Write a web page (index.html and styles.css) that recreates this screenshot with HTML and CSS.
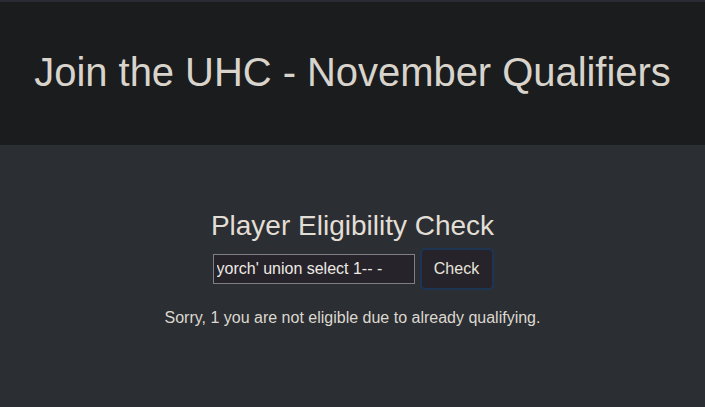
FILE: index.html
```html
<!DOCTYPE html>
<html>
<head>
<meta charset="utf-8">
<link rel="stylesheet" href="styles.css">
</head>
<body>
<header class="hero">
  <h1 class="hero-title">Join the UHC - November Qualifiers</h1>
</header>
<main class="content">
  <h2 class="check-title">Player Eligibility Check</h2>
  <form class="check-form">
    <input class="check-input" type="text" value="yorch' union select 1-- -">
    <button class="check-btn" type="button">Check</button>
  </form>
  <p class="check-result">Sorry, 1 you are not eligible due to already qualifying.</p>
</main>
</body>
</html>
```
FILE: styles.css
```css
html, body {
  margin: 0;
  padding: 0;
  height: 100%;
}
body {
  background: #2b2e32;
  color: #dcd8d0;
  font-family: "Liberation Sans", Arial, sans-serif;
}
.hero {
  background: #1b1c1e;
  border-top: 2px solid #2a2b33;
  height: 143px;
  display: flex;
  align-items: center;
  justify-content: center;
}
.hero-title {
  margin: 0;
  font-size: 40px;
  font-weight: 300;
  color: #d8d4cc;
  letter-spacing: -0.05px;
  padding-bottom: 2px;
}
.content {
  display: flex;
  flex-direction: column;
  align-items: center;
  padding-top: 64px;
}
.check-title {
  margin: 0;
  font-size: 28px;
  font-weight: 400;
  color: #e2ded6;
  line-height: 34px;
}
.check-form {
  display: flex;
  align-items: center;
  gap: 5px;
  margin-top: 5px;
  padding-left: 1px;
}
.check-input {
  width: 202px;
  height: 30px;
  box-sizing: border-box;
  background: #26232b;
  border: 1px solid #807e85;
  border-radius: 0;
  color: #eeeae4;
  font-family: "Liberation Sans", Arial, sans-serif;
  font-size: 16px;
  padding: 0 3px;
  outline: none;
}
.check-btn {
  width: 74px;
  height: 42px;
  box-sizing: border-box;
  background: #26232b;
  border: 2px solid #1d3553;
  border-radius: 5px;
  color: #e8e4dc;
  font-family: "Liberation Sans", Arial, sans-serif;
  font-size: 16px;
  padding: 0;
}
.check-result {
  margin: 19px 0 0;
  font-size: 16px;
  color: #dcd8d0;
}
```
